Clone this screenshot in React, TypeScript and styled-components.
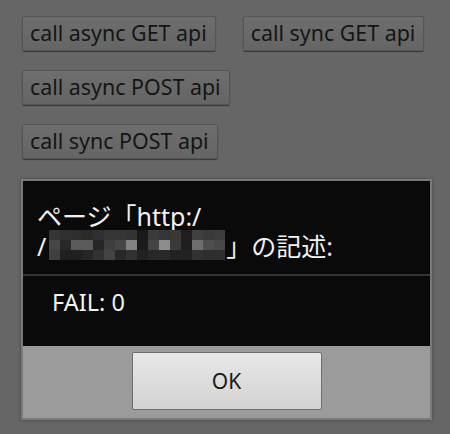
import React from 'react';
import styled, { createGlobalStyle } from 'styled-components';

const GlobalStyle = createGlobalStyle`
  html, body {
    margin: 0;
    padding: 0;
    background: #666666;
  }
  body {
    font-family: 'Noto Sans', 'Noto Sans CJK JP', sans-serif;
  }
`;

const Screen = styled.div`
  width: 450px;
  height: 434px;
  background: #666666;
  display: flex;
  flex-direction: column;
  overflow: hidden;
`;

const ButtonArea = styled.div`
  display: flex;
  flex-direction: column;
  gap: 19px;
  padding: 16px 0 0 22px;
`;

const ButtonRow = styled.div`
  display: flex;
  gap: 27px;
`;

const ApiButton = styled.button`
  height: 35px;
  padding: 0 8px 2px 7px;
  background: linear-gradient(#6e6e6e, #656565);
  border: 1px solid #555555;
  border-radius: 2px;
  box-shadow: 0 1px 1px rgba(0, 0, 0, 0.45);
  color: #151515;
  font-family: 'Noto Sans', sans-serif;
  font-size: 21.4px;
  line-height: 1;
  cursor: pointer;
`;

const Dialog = styled.div`
  margin: 20px 0 0 21px;
  width: 411px;
  height: 241px;
  box-sizing: border-box;
  border: 2px solid #7a7a7a;
  box-shadow: 0 0 3px rgba(0, 0, 0, 0.35);
  display: flex;
  flex-direction: column;
  background: #0a0a0a;
`;

const Title = styled.div`
  height: 95px;
  box-sizing: border-box;
  padding: 20px 12px 0 14px;
  color: #f2f2f2;
  font-family: 'Noto Sans', 'Noto Sans CJK JP', sans-serif;
  font-size: 25px;
  border-bottom: 2px solid #343434;
`;

const TitleLine = styled.div`
  display: flex;
  align-items: center;
  height: 30px;
  line-height: 28px;
  white-space: nowrap;
`;

const Mosaic = styled.span`
  display: grid;
  grid-template-columns: repeat(16, 11px);
  grid-auto-rows: 10px;
  margin: -2px 1px 0 3px;
`;

const Cell = styled.span`
  display: block;
`;

const Message = styled.div`
  flex: 1;
  padding: 11px 20px 0 29px;
  color: #f2f2f2;
  font-family: 'Noto Sans', sans-serif;
  font-size: 23.5px;
  line-height: 30px;
`;

const ButtonBar = styled.div`
  height: 72px;
  background: #9b9b9b;
  display: flex;
  justify-content: center;
  align-items: flex-start;
  padding-top: 6px;
  box-sizing: border-box;
`;

const OkButton = styled.button`
  width: 190px;
  height: 58px;
  background: linear-gradient(#e8e8e8, #d2d2d2);
  border: 1px solid #6f6f6f;
  border-radius: 2px;
  color: #1a1a1a;
  font-family: 'Noto Sans', sans-serif;
  font-size: 21px;
  cursor: pointer;
`;

const mosaic = [
  [54, 48, 46, 42, 48, 54, 54, 50, 26, 58, 54, 56, 30, 64, 58, 60],
  [70, 40, 90, 90, 38, 62, 70, 130, 28, 68, 140, 58, 30, 110, 78, 72],
  [64, 32, 32, 38, 50, 68, 40, 50, 34, 40, 40, 34, 34, 50, 46, 46],
];

const App: React.FC = () => {
  return (
    <Screen>
      <GlobalStyle />
      <ButtonArea>
        <ButtonRow>
          <ApiButton>call async GET api</ApiButton>
          <ApiButton>call sync GET api</ApiButton>
        </ButtonRow>
        <ButtonRow>
          <ApiButton>call async POST api</ApiButton>
        </ButtonRow>
        <ButtonRow>
          <ApiButton>call sync POST api</ApiButton>
        </ButtonRow>
      </ButtonArea>
      <Dialog>
        <Title>
          <TitleLine>ページ「http:/</TitleLine>
          <TitleLine>
            /
            <Mosaic>
              {mosaic.flat().map((v, i) => (
                <Cell key={i} style={{ background: `rgb(${v},${v},${v})` }} />
              ))}
            </Mosaic>
            」の記述:
          </TitleLine>
        </Title>
        <Message>FAIL: 0</Message>
        <ButtonBar>
          <OkButton>OK</OkButton>
        </ButtonBar>
      </Dialog>
    </Screen>
  );
};

export default App;
